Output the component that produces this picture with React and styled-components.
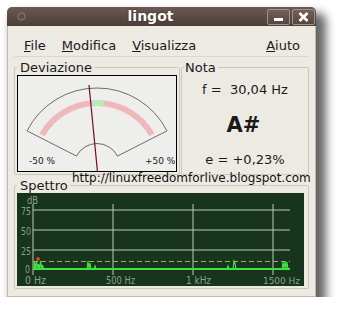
import React from 'react';
import styled, { createGlobalStyle } from 'styled-components';

const GlobalStyle = createGlobalStyle`
  html, body {
    margin: 0;
    background: #fff;
  }
  body {
    font-family: "DejaVu Sans", "Liberation Sans", sans-serif;
    color: #1a1a1a;
  }
`;

const Page = styled.div`
  padding: 7px 0 0 7px;
`;

const Window = styled.div`
  width: 309px;
  display: flex;
  flex-direction: column;
  background: #ede9e3;
  border-radius: 5px 5px 0 0;
  box-shadow: 7px 9px 10px 3px rgba(0, 0, 0, 0.6);
`;

const TitleBar = styled.div`
  height: 19px;
  display: flex;
  align-items: center;
  padding: 0 1px 0 10px;
  background: linear-gradient(#6b5952, #4d3e39);
  border-radius: 5px 5px 0 0;
`;

const Title = styled.div`
  flex: 1;
  padding-left: 8px;
  text-align: center;
  color: #fff;
  font-weight: bold;
  font-size: 14px;
  line-height: 19px;
  text-shadow: 0 0 2px rgba(0, 0, 0, 0.5);
`;

const Buttons = styled.div`
  display: flex;
  gap: 2px;
`;

const WinButton = styled.div`
  width: 23px;
  height: 16px;
  box-sizing: border-box;
  display: flex;
  align-items: center;
  justify-content: center;
  border: 1px solid #a39088;
  border-radius: 2px;
  background: linear-gradient(#736159, #54453f);
`;

const Body = styled.div`
  display: flex;
  flex-direction: column;
  border: 1px solid #c6b9a4;
  border-top: none;
`;

const MenuBar = styled.div`
  height: 31px;
  box-sizing: border-box;
  margin: 0 6px;
  padding: 12px 1px 0 2px;
  display: flex;
  border-bottom: 1px solid #dcd6cc;
`;

const MenuItem = styled.div`
  padding: 0 8px;
  font-size: 13px;
  line-height: 15px;
  margin-left: ${p => (p.right ? 'auto' : '0')};
  u {
    text-underline-offset: 1px;
  }
`;

const Content = styled.div`
  position: relative;
  padding: 3px 6px 7px;
  display: flex;
  flex-direction: column;
  gap: 3px;
`;

const TopRow = styled.div`
  display: grid;
  grid-template-columns: 166px 128px;
  gap: 1px;
`;

const Frame = styled.fieldset`
  margin: 0;
  min-width: 0;
  padding: 0 ${p => p.padRight || 2}px 2px 2px;
  border: 1px solid #cdc6bb;
  border-radius: 2px;
`;

const Legend = styled.legend`
  padding: 0 2px 0 ${p => p.indent}px;
  font-size: 13px;
  line-height: 15px;
`;

const GaugeBox = styled.div`
  height: 97px;
  box-sizing: border-box;
  border: 1px solid #000;
  background: #eeeeec;
  overflow: hidden;
`;

const NoteBody = styled.div`
  display: flex;
  flex-direction: column;
  align-items: center;
  padding-top: 7px;
  gap: 15px;
`;

const Reading = styled.div`
  font-size: 13px;
  line-height: 16px;
  white-space: pre;
`;

const NoteName = styled.div`
  font-size: 21px;
  font-weight: bold;
  line-height: 24px;
  margin-left: -3px;
`;

const Watermark = styled.div`
  position: absolute;
  left: 64px;
  top: 114px;
  font-size: 12px;
  line-height: 14px;
  color: #111;
  white-space: nowrap;
`;

const Chart = styled.svg`
  display: block;
  background: #16351c;
`;

const polar = (cx, cy, r, deg) => {
  const a = (deg * Math.PI) / 180;
  return [cx + r * Math.sin(a), cy - r * Math.cos(a)].map(v => v.toFixed(2)).join(',');
};

const arc = (cx, cy, r, from, to) =>
  `M${polar(cx, cy, r, from)} A${r},${r} 0 0 1 ${polar(cx, cy, r, to)}`;

const Gauge = () => {
  const cx = 79;
  const cy = 90.5;
  const outline =
    `M${polar(cx, cy, 78.5, -63)} A78.5,78.5 0 0 1 ${polar(cx, cy, 78.5, 63)} ` +
    `L${polar(cx, cy, 23, 63)} A23,23 0 0 0 ${polar(cx, cy, 23, -63)} Z`;
  return (
    <svg width="158" height="95" viewBox="0 0 158 95">
      <path d={outline} fill="none" stroke="#4a4a4a" strokeWidth="0.8" />
      <path d={arc(cx, cy, 63.5, -60, 60)} fill="none" stroke="#efb9bb" strokeWidth="6" />
      <path d={arc(cx, cy, 63.5, -4.5, 6.3)} fill="none" stroke="#b9ecbb" strokeWidth="6" />
      <line x1="71" y1="9" x2="79.5" y2="96" stroke="#7a0a2a" strokeWidth="1.2" />
      <text x="11" y="88" fontSize="9" fill="#222">-50 %</text>
      <text x="127" y="88" fontSize="9" fill="#222">+50 %</text>
    </svg>
  );
};

const grid = '#c3c7b5';
const label = '#8c9f8a';

const Spectrum = () => (
  <Chart width="287" height="93" viewBox="0 0 287 93">
    {[17, 37, 57].map(y => (
      <line key={y} x1="16" y1={y} x2="273" y2={y} stroke={grid} strokeWidth="1" />
    ))}
    {[16, 96, 176, 256].map(x => (
      <line key={x} x1={x} y1="11" x2={x} y2="82" stroke={grid} strokeWidth="1" />
    ))}
    <line x1="16" y1="68.5" x2="273" y2="68.5" stroke="#a9a66a" strokeWidth="1" strokeDasharray="5 3" />
    <path
      d="M17,76 L17.5,69 L18.5,76 L19.5,68 L20.5,76 L21.5,71 L22.5,76 L23.5,68 L24.5,76 L25.5,72 L26.5,76
         M70,76 L71,68 L72,76 L73,70 L74,76 M77,76 L78,73 L79,76
         M210,76 L211,73 L212,76 M216,76 L217,68 L218,70 L219,76
         M265,76 L266,69 L267,76 L268,68 L269,76 L270,69 L271,76"
      fill="none"
      stroke="#3fe043"
      strokeWidth="1.2"
    />
    <line x1="16" y1="76" x2="273" y2="76" stroke="#3fe043" strokeWidth="2.2" />
    <circle cx="21" cy="66" r="2" fill="#c8482c" />
    <g fontSize="10.5" fill={label}>
      <text x="10" y="10.5" textLength="11" lengthAdjust="spacingAndGlyphs">dB</text>
      <text x="4" y="21.5" textLength="10" lengthAdjust="spacingAndGlyphs">75</text>
      <text x="4" y="41.5" textLength="10" lengthAdjust="spacingAndGlyphs">50</text>
      <text x="4" y="61.5" textLength="10" lengthAdjust="spacingAndGlyphs">25</text>
      <text x="8" y="79.5" textLength="5" lengthAdjust="spacingAndGlyphs">0</text>
      <text x="8" y="91" textLength="21" lengthAdjust="spacingAndGlyphs">0 Hz</text>
      <text x="89" y="91" textLength="29" lengthAdjust="spacingAndGlyphs">500 Hz</text>
      <text x="169" y="91" textLength="25" lengthAdjust="spacingAndGlyphs">1 kHz</text>
      <text x="246" y="91" fontSize="9.5" textLength="37" lengthAdjust="spacingAndGlyphs">1500 Hz</text>
    </g>
  </Chart>
);

const App = () => (
  <Page>
    <GlobalStyle />
    <Window>
      <TitleBar>
        <svg width="9" height="9" viewBox="0 0 9 9">
          <circle cx="4.5" cy="4.5" r="3.6" fill="#5e4d47" stroke="#8f7f78" strokeWidth="1" />
        </svg>
        <Title>lingot</Title>
        <Buttons>
          <WinButton>
            <svg width="11" height="10" viewBox="0 0 11 10">
              <rect x="1" y="6" width="9" height="3" fill="#fff" />
            </svg>
          </WinButton>
          <WinButton>
            <svg width="11" height="10" viewBox="0 0 11 10">
              <path d="M1.5,1 L9.5,9 M9.5,1 L1.5,9" stroke="#fff" strokeWidth="2.6" />
            </svg>
          </WinButton>
        </Buttons>
      </TitleBar>
      <Body>
        <MenuBar>
          <MenuItem><u>F</u>ile</MenuItem>
          <MenuItem><u>M</u>odifica</MenuItem>
          <MenuItem><u>V</u>isualizza</MenuItem>
          <MenuItem right><u>A</u>iuto</MenuItem>
        </MenuBar>
        <Content>
          <TopRow>
            <Frame>
              <Legend indent={3}>Deviazione</Legend>
              <GaugeBox>
                <Gauge />
              </GaugeBox>
            </Frame>
            <Frame>
              <Legend indent={1}>Nota</Legend>
              <NoteBody>
                <Reading>f =  30,04 Hz</Reading>
                <NoteName>A#</NoteName>
                <Reading>e = +0,23%</Reading>
              </NoteBody>
            </Frame>
          </TopRow>
          <Frame padRight={4}>
            <Legend indent={3}>Spettro</Legend>
            <Spectrum />
          </Frame>
          <Watermark>http://linuxfreedomforlive.blogspot.com</Watermark>
        </Content>
      </Body>
    </Window>
  </Page>
);

export default App;
